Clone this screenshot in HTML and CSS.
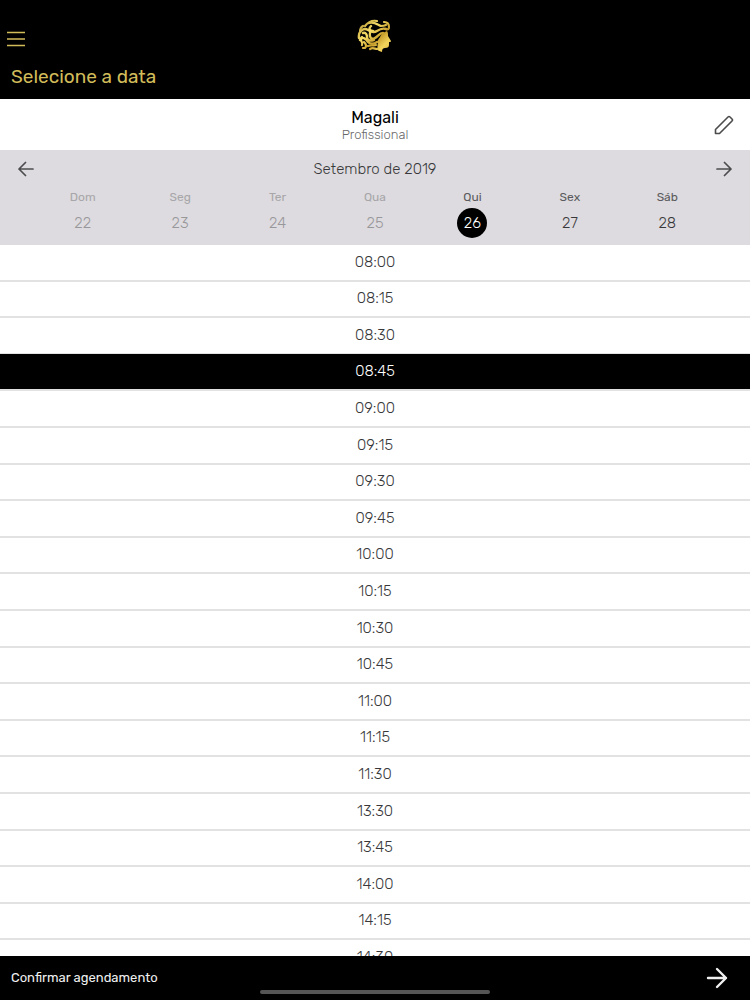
FILE: index.html
```html
<!DOCTYPE html>
<html lang="pt-BR">
<head>
<meta charset="utf-8">
<meta name="viewport" content="width=device-width, initial-scale=1">
<title>Selecione a data</title>
<link rel="stylesheet" href="styles.css">
</head>
<body>
<header class="header">
  <div class="topbar">
    <button class="icon-button menu" type="button" aria-label="Menu">
      <svg width="20" height="18" viewBox="0 0 20 18" stroke="currentColor" stroke-width="1.5"><path d="M1 2.500h18M1 9h18M1 15.500h18"/></svg>
    </button>
    <svg class="logo" width="36" height="36" viewBox="0 0 36 36" fill="none" stroke="url(#gold)" stroke-linecap="round" stroke-linejoin="round" aria-hidden="true">
      <defs>
        <linearGradient id="gold" gradientUnits="userSpaceOnUse" x1="2" y1="2" x2="33" y2="34">
          <stop offset="0" stop-color="#a98a2b"/><stop offset=".35" stop-color="#f6dd68"/><stop offset=".6" stop-color="#c8a02c"/><stop offset=".8" stop-color="#f3d55c"/><stop offset="1" stop-color="#dcb53c"/>
        </linearGradient>
      </defs>
      <path fill="url(#gold)" stroke="none" d="M30 13c1 1 1 3 1 5l3 5c0 1-1 1-2 1v3c0 2-1 3-4 3-2 0-3 1-3 4-2-1-4-1-5-3 1-2 0-4 1-6-1-3 1-4 2-6 1-3 4-5 7-6z"/>
      <path stroke-width="2.2" d="M3 14c0-3 1-5 3-6M8 8c3-4 7-6 12-5M12 5c5-2 9 2 12 3 2 0 3 0 5-1M27 4c3 0 5 2 5 5 0 2-1 3-3 2"/>
      <path stroke-width="2.4" d="M2 20c-1-6 4-11 9-8 3 2 6 3 9 1 3-2 6-3 9-2M14 8c-3 3-1 5 2 5"/>
      <path stroke-width="2.4" d="M6 15c3-1 4 2 4 4 0 4 4 4 7 3M13 15c-1 4 1 7 5 5 3-1 4-5 8-5M3 22c3-4 6-1 8 2 3 3 6 2 9 0"/>
      <path stroke-width="2.2" d="M5 19c-4 3 2 5 0 8M7 24c2 2 3 4 1 6H6M11 28c2-1 4 0 8-1M13 31c3-2 5 0 7 0"/>
    </svg>
  </div>
  <h1 class="title">Selecione a data</h1>
</header>

<section class="professional">
  <div class="person">
    <h2 class="name">Magali</h2>
    <p class="role">Profissional</p>
  </div>
  <button class="icon-button edit" type="button" aria-label="Alterar profissional">
    <svg width="20" height="20" viewBox="0 0 20 20" fill="none" stroke="currentColor" stroke-width="1.600" stroke-linejoin="round"><path d="M1.500 14.500 14 2Q15 1 16 2L18 4Q19 5 18 6L5.500 18.500H1.500z"/></svg>
  </button>
</section>

<section class="calendar" aria-label="Calendário">
  <div class="month-row">
    <button class="icon-button" type="button" aria-label="Semana anterior">
      <svg width="16" height="16" viewBox="0 0 16 16" fill="none" stroke="currentColor" stroke-width="1.700" stroke-linecap="round" stroke-linejoin="round"><path d="M15 8H1M7.500 1.500 1 8l6.500 6.500"/></svg>
    </button>
    <h2 class="month">Setembro de 2019</h2>
    <button class="icon-button" type="button" aria-label="Próxima semana">
      <svg width="16" height="16" viewBox="0 0 16 16" fill="none" stroke="currentColor" stroke-width="1.700" stroke-linecap="round" stroke-linejoin="round"><path d="M1 8h14M8.500 1.500 15 8l-6.500 6.500"/></svg>
    </button>
  </div>
  <div class="week">
    <button class="day" type="button" disabled><span class="weekday">Dom</span><span class="date">22</span></button>
    <button class="day" type="button" disabled><span class="weekday">Seg</span><span class="date">23</span></button>
    <button class="day" type="button" disabled><span class="weekday">Ter</span><span class="date">24</span></button>
    <button class="day" type="button" disabled><span class="weekday">Qua</span><span class="date">25</span></button>
    <button class="day" type="button" aria-pressed="true"><span class="weekday">Qui</span><span class="date">26</span></button>
    <button class="day" type="button"><span class="weekday">Sex</span><span class="date">27</span></button>
    <button class="day" type="button"><span class="weekday">Sáb</span><span class="date">28</span></button>
  </div>
</section>

<main class="times">
  <button class="time" type="button">08:00</button>
  <button class="time" type="button">08:15</button>
  <button class="time" type="button">08:30</button>
  <button class="time" type="button" aria-pressed="true">08:45</button>
  <button class="time" type="button">09:00</button>
  <button class="time" type="button">09:15</button>
  <button class="time" type="button">09:30</button>
  <button class="time" type="button">09:45</button>
  <button class="time" type="button">10:00</button>
  <button class="time" type="button">10:15</button>
  <button class="time" type="button">10:30</button>
  <button class="time" type="button">10:45</button>
  <button class="time" type="button">11:00</button>
  <button class="time" type="button">11:15</button>
  <button class="time" type="button">11:30</button>
  <button class="time" type="button">13:30</button>
  <button class="time" type="button">13:45</button>
  <button class="time" type="button">14:00</button>
  <button class="time" type="button">14:15</button>
  <button class="time" type="button">14:30</button>
</main>

<footer class="footer">
  <button class="confirm" type="button">
    <span>Confirmar agendamento</span>
    <svg width="22" height="22" viewBox="0 0 22 22" fill="none" stroke="currentColor" stroke-width="2.400" stroke-linecap="round" stroke-linejoin="round"><path d="M2 11h18M11 2l9 9-9 9"/></svg>
  </button>
  <div class="home-indicator"></div>
</footer>
</body>
</html>
```
FILE: styles.css
```css
* { box-sizing: border-box; }

body {
  display: flex;
  flex-direction: column;
  height: 100vh;
  margin: 0;
  background: #fff;
  color: #38383a;
  font-family: Rubik, Roboto, "Liberation Sans", sans-serif;
  font-size: 15px;
  font-weight: 300;
  line-height: 20px;
}

h1, h2, p { margin: 0; font-weight: inherit; }

button {
  margin: 0;
  padding: 0;
  border: 0;
  background: none;
  color: inherit;
  font: inherit;
  cursor: pointer;
}

svg { display: block; }

.icon-button { color: #4c4c4e; }

.header {
  flex: none;
  padding: 18px 6px 10px;
  background: #000;
  color: #d2bc5a;
}

.topbar {
  display: grid;
  grid-template-columns: 1fr auto 1fr;
  align-items: center;
  height: 36px;
}

.menu { justify-self: start; padding-top: 5px; color: inherit; }

.title {
  padding: 11px 5px 0;
  font-size: 19px;
  font-weight: 400;
  line-height: 24px;
}

.professional {
  display: grid;
  grid-template-columns: 1fr auto 1fr;
  flex: none;
  align-items: center;
  padding: 9px 16px 8px;
}

.person { grid-column: 2; text-align: center; }
.name { color: #000; font-size: 16px; font-weight: 400; line-height: 20px; }
.role { color: #69696b; font-size: 13px; line-height: 14px; }
.edit { justify-self: end; }

.calendar {
  flex: none;
  padding: 8px 0 7px;
  background: #dddbdf;
}

.month-row {
  display: flex;
  align-items: center;
  justify-content: space-between;
  height: 22px;
  padding: 0 18px;
}

.month { font-size: 15px; line-height: 20px; }

.week {
  display: grid;
  grid-template-columns: repeat(7, 1fr);
  padding: 10px 34px 0;
}

.day {
  display: flex;
  flex-direction: column;
  align-items: center;
  gap: 3px;
}

.weekday { color: #5a5a5c; font-size: 12px; font-weight: 400; line-height: 15px; }

.date {
  width: 30px;
  height: 30px;
  border-radius: 50%;
  line-height: 30px;
}

.day:disabled { color: #98979a; cursor: default; }
.day:disabled .weekday { color: #a7a6a9; }
.day[aria-pressed="true"] .date { background: #000; color: #fff; }

.times {
  flex: 1;
  min-height: 0;
  overflow-y: auto;
  scrollbar-width: none;
}

.time {
  display: block;
  width: 100%;
  height: 37px;
  padding-bottom: 2px;
  border-bottom: 2px solid #e2e2e3;
}

.time:nth-child(5n + 2),
.time:nth-child(5n + 4) { height: 36px; }

.time[aria-pressed="true"] {
  background: #000;
  box-shadow: 0 -1px #000;
  color: #fff;
}

.footer {
  flex: none;
  background: #000;
  color: #fff;
}

.confirm {
  display: flex;
  align-items: center;
  justify-content: space-between;
  width: 100%;
  padding: 11px 22px 1px 11px;
  color: #f0f0f0;
  font-size: 13px;
  font-weight: 400;
}

.home-indicator {
  width: 230px;
  height: 4px;
  margin: 0 auto 6px;
  border-radius: 2px;
  background: #555;
}
```
